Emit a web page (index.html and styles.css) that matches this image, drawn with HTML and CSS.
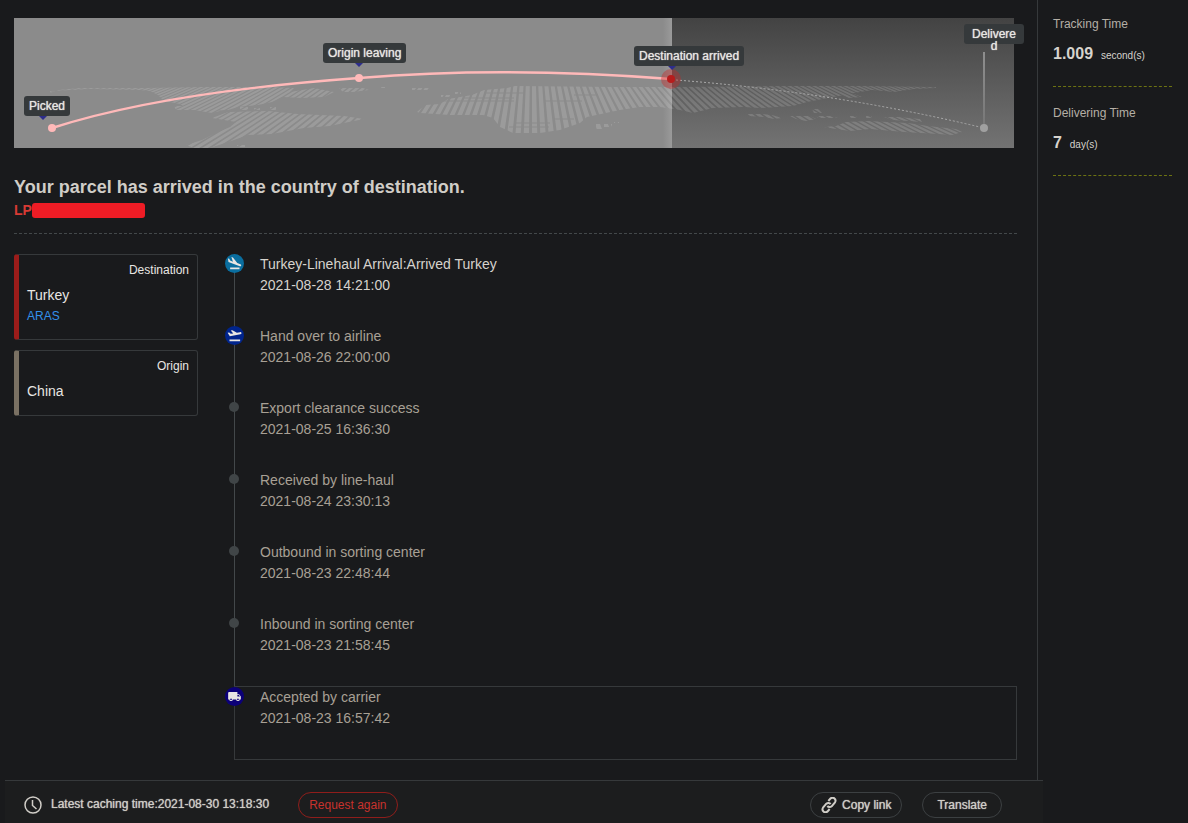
FILE: index.html
```html
<!DOCTYPE html>
<html lang="en">
<head>
  <meta charset="UTF-8">
  <title>Parcel tracking</title>
  <link rel="stylesheet" href="styles.css">
</head>
<body>
  <div class="page">
    <main class="main">
      <section class="route">
        <svg class="route-map" viewBox="0 0 1000 130">
          <defs>
            <linearGradient id="ahead" x1="0" y1="0" x2="0" y2="1">
              <stop offset="0" stop-color="#434343"/>
              <stop offset="1" stop-color="#737373"/>
            </linearGradient>
            <linearGradient id="edge">
              <stop offset="0" stop-color="#8b8b8b"/>
              <stop offset="1" stop-color="#9a9a9a"/>
            </linearGradient>
            <linearGradient id="pole" x1="0" y1="0" x2="0" y2="1">
              <stop offset="0" stop-color="#8e8e8e"/>
              <stop offset="1" stop-color="#777"/>
            </linearGradient>
            <clipPath id="land">
              <path d="M36 75l8-3 22-2h62l60-1h70l22 1-4 4 24-4 20 4-10 5-22 1-20-1-10 5-14 3-20 2-10 3-26 1-14-2-8-5-16-3-6-6-8-4-10-1-50-1-40 2z"/>
              <path d="M160 88h18l16 2 12 3-8 2-18-3-18 0zM226 89h8v3h-8zM240 90h6v2h-6zM256 89h6v3h-6z"/>
              <path d="M198 100l16-6 40-1 30 3 46 2 20 3-20 4-14 3-26 2-32 6-24 1-14 5-12 4-12 4h-16l-8-3 16-5 14-7 14-6 6-5z"/>
              <path d="M223 127h8v2h-8zM325 70h24l6 2-16 2h-10zM366 69h5v1h-5zM398 70h18v2h-18zM325 101h8v2h-8z"/>
              <path d="M403 94L411 87L426 86L434 81L458 77L470 72L493 70L501 68L606 69L660 69L780 68L846 68L922 69L922 70L900 71L880 74L858 72L846 74L819 79L793 84L779 88L746 90L729 89L699 90L679 95L666 92L646 89L626 89L606 92L573 99L566 105L546 112L526 115L499 115L486 109L479 100L469 97L436 97L406 95Z"/>
              <path d="M427 77h10v2h-10zM441 74h6v2h-6zM582 106h6v5h-6zM590 106h8v3h-8zM600 104h5v1h-5z"/>
              <path d="M734 96h14l10 1 10 3-8 1-10-2-16-1zM776 98h20l6 3-10 2-10-2zM798 91h6l4 4h-8zM802 98h14l8 2-20 0zM836 98h6l2 2h-8zM826 76h14l8 3-14 1zM852 98h6v2h-6z"/>
              <path d="M870 99h14l22 2 2 3-14-1-16-1zM810 109l12-1 10-4 22-1 40 2 20 3 28 3 6 3-10 3-14-1-34-2-34-3-20 2-14-2z"/>
            </clipPath>
          </defs>
          <rect width="1000" height="130" fill="#8b8b8b"/>
          <rect x="649" width="9" height="130" fill="url(#edge)"/>
          <rect x="658" width="342" height="130" fill="url(#ahead)"/>
          <g clip-path="url(#land)">
            <path id="meridians" fill="#fff" fill-opacity=".14"/>
            <path d="M450 80h50M470 75h40M430 83h70M530 83h38M560 77h24M495 109h40M500 105h36M540 101h20" stroke="#8b8b8b"/>
          </g>
          <path d="M38 110Q150 74 345 60Q490 48 657 61" fill="none" stroke="#ffb9b9" stroke-width="2.4"/>
          <path d="M662 62Q820 74 970 110" fill="none" stroke="#aaa" stroke-dasharray="2 2"/>
          <path d="M969 34h2v76h-2z" fill="url(#pole)"/>
          <circle cx="38" cy="110" r="4" fill="#ffb9b9"/>
          <circle cx="345" cy="60" r="4" fill="#ffb9b9"/>
          <circle cx="657" cy="61" r="10" fill="#c62828" fill-opacity=".4"/>
          <circle cx="657" cy="61" r="4" fill="#b71c1c"/>
          <circle cx="970" cy="110" r="4" fill="#a0a0a0"/>
        </svg>
        <span class="tag tag-picked">Picked</span>
        <span class="tag tag-leaving">Origin leaving</span>
        <span class="tag tag-arrived">Destination arrived</span>
        <span class="tag tag-delivered">Delivered</span>
      </section>

      <header class="summary">
        <h1>Your parcel has arrived in the country of destination.</h1>
        <div class="number">LP<span class="redacted"></span></div>
      </header>

      <div class="details">
        <aside class="places">
          <div class="place destination">
            <span class="place-type">Destination</span>
            <span class="country">Turkey</span>
            <a href="#">ARAS</a>
          </div>
          <div class="place origin">
            <span class="place-type">Origin</span>
            <span class="country">China</span>
          </div>
        </aside>

        <ol class="timeline">
          <li class="latest">
            <span class="badge badge-land">
              <svg viewBox="0 0 24 24"><path d="M5 18.500h15v2.500H5zM20.500 16.500c1 .3 1.900-.2 2.100-1.100.3-.9-.2-1.700-1.200-2.100l-5-2L9.500 2.500 7 1.500l2.500 7.500-4.500-2L3.500 4.500 1.500 4l.8 5.500z"/></svg>
            </span>
            <p>Turkey-Linehaul Arrival:Arrived Turkey</p>
            <time>2021-08-28 14:21:00</time>
          </li>
          <li>
            <span class="badge badge-takeoff">
              <svg viewBox="0 0 24 24"><path d="M4 18.500h17V21H4zM1 7.500l2.500-.2 2.500 2 4-.6L6 4l2.800-.5 7 4 5-.9c1.200-.2 2.200.3 2.400 1.300s-.5 1.700-1.700 2L4.500 13z"/></svg>
            </span>
            <p>Hand over to airline</p>
            <time>2021-08-26 22:00:00</time>
          </li>
          <li>
            <span class="dot"></span>
            <p>Export clearance success</p>
            <time>2021-08-25 16:36:30</time>
          </li>
          <li>
            <span class="dot"></span>
            <p>Received by line-haul</p>
            <time>2021-08-24 23:30:13</time>
          </li>
          <li>
            <span class="dot"></span>
            <p>Outbound in sorting center</p>
            <time>2021-08-23 22:48:44</time>
          </li>
          <li>
            <span class="dot"></span>
            <p>Inbound in sorting center</p>
            <time>2021-08-23 21:58:45</time>
          </li>
          <li class="first-event">
            <span class="badge badge-truck">
              <svg viewBox="-1 -1 26 26"><path d="M20 8h-3V4H3c-1.1 0-2 .9-2 2v11h2c0 1.66 1.34 3 3 3s3-1.34 3-3h6c0 1.66 1.34 3 3 3s3-1.34 3-3h2v-5zM6 18.5c-.83 0-1.5-.67-1.5-1.5s.67-1.5 1.5-1.5 1.5.67 1.5 1.5-.67 1.5-1.5 1.5zm13.5-9l1.96 2.5H17V9.5zm-1.5 9c-.83 0-1.5-.67-1.5-1.5s.67-1.5 1.5-1.5 1.5.67 1.5 1.5-.67 1.5-1.5 1.5z"/></svg>
            </span>
            <p>Accepted by carrier</p>
            <time>2021-08-23 16:57:42</time>
          </li>
        </ol>
      </div>
    </main>

    <aside class="stats">
      <div class="stat">
        <h2>Tracking Time</h2>
        <p><strong>1.009</strong> <small>second(s)</small></p>
      </div>
      <div class="stat">
        <h2>Delivering Time</h2>
        <p><strong>7</strong> <small>day(s)</small></p>
      </div>
    </aside>

    <footer class="bar">
      <svg class="clock" viewBox="0 0 18 18"><circle cx="9" cy="9" r="8"/><path d="M8.500 4v5.500l4 3.500"/></svg>
      <span class="caching">Latest caching time:2021-08-30 13:18:30</span>
      <button type="button" class="request">Request again</button>
      <button type="button" class="copy">
        <svg class="link-icon" viewBox="0 0 24 24"><path d="M9.500 13.500a4.500 4.500 0 0 0 6.500.5l5-6a4.500 4.500 0 0 0-6.500-6l-3.500 4"/><path d="M14.500 10.500a4.500 4.500 0 0 0-6.500-.5l-5 6a4.500 4.500 0 0 0 6.500 6l3.500-4"/></svg>
        Copy link
      </button>
      <button type="button" class="translate">Translate</button>
    </footer>
  </div>
  <script src="map.js"></script>
</body>
</html>
```

FILE: styles.css
```css
* {
  box-sizing: border-box;
}
body {
  margin: 0;
  background-color: #191a1c;
  color: #d6d3cd;
  font-family: "Liberation Sans", Arial, sans-serif;
  font-size: 14px;
  line-height: 21px;
}
h1, h2, p, ol {
  margin: 0;
  padding: 0;
}
.page {
  display: grid;
  grid-template-columns: 1fr 150px;
  grid-template-rows: 1fr auto;
  min-height: 100vh;
}
.main {
  padding: 18px 20px 20px 14px;
  border-right: 1px solid #36393b;
}

/* route banner */
.route {
  position: relative;
  margin-right: 3px;
}
.route-map {
  display: block;
  width: 100%;
}
.tag {
  position: absolute;
  height: 20px;
  padding: 0 5px;
  border-radius: 3px;
  background-color: #35393b;
  color: #e8e6e3;
  font-size: 12px;
  line-height: 20px;
  text-shadow: 0 0 1px #e8e6e3;
  white-space: nowrap;
}
.tag::after {
  content: "";
  position: absolute;
  top: 20px;
  left: 50%;
  border: 4px solid transparent;
  border-top-color: #2d2d8c;
  border-bottom: 0;
}
.tag-picked {
  left: 1%;
  top: 60%;
}
.tag-picked::after {
  left: 15px;
}
.tag-leaving {
  left: 30.9%;
  top: 19%;
}
.tag-leaving::after {
  left: 32px;
}
.tag-arrived {
  left: 62%;
  top: 21.5%;
}
.tag-arrived::after {
  left: 34px;
}
.tag-delivered {
  left: 95%;
  top: 4.5%;
  width: 60px;
  padding: 4px 7px;
  line-height: 12px;
  text-align: center;
  white-space: normal;
  word-break: break-all;
}
.tag-delivered::after {
  left: 16px;
  z-index: -1;
  border-top-color: #35393b;
}

/* headline */
.summary {
  padding: 28px 0 11px;
  border-bottom: 1px dashed #43484a;
}
h1 {
  font-size: 18px;
  line-height: 22px;
  color: #d0cdc7;
}
.number {
  display: flex;
  align-items: center;
  height: 24px;
  color: #d83a34;
  font-weight: bold;
}
.redacted {
  width: 113px;
  height: 15px;
  border-radius: 3px;
  background-color: #ee1c25;
}

/* places and events */
.details {
  display: flex;
  gap: 36px;
  padding-top: 20px;
}
.places {
  display: flex;
  flex-direction: column;
  gap: 10px;
  width: 184px;
}
.place {
  display: flex;
  flex-direction: column;
  padding: 5px 8px 13px;
  border: 1px solid #36393b;
  border-left: 5px solid #9b1c1a;
  border-radius: 3px;
}
.origin {
  border-left-color: #7a7163;
}
.place-type {
  align-self: flex-end;
  line-height: 20px;
  color: #e8e6e3;
  font-size: 12px;
}
.country {
  padding-top: 5px;
  color: #e8e6e3;
}
.place a {
  line-height: 20px;
  color: #3391ea;
  font-size: 12px;
  text-decoration: none;
}
.timeline {
  flex: 1;
  list-style: none;
}
.timeline li {
  position: relative;
  height: 72px;
  padding-left: 25px;
  border-left: 1px solid #43484a;
  color: #a8a095;
}
.timeline .latest {
  color: #d6d3cd;
}
.timeline .first-event {
  height: 74px;
  border: 1px solid #36393b;
}
.timeline time {
  display: block;
}
.badge {
  position: absolute;
  top: 0;
  left: -10px;
  display: flex;
  align-items: center;
  justify-content: center;
  width: 19px;
  height: 19px;
  border-radius: 50%;
}
.badge svg {
  width: 15px;
  height: 15px;
  fill: #e8e6e3;
}
.badge-land {
  background-color: #0a6e9f;
}
.badge-takeoff {
  background-color: #00248c;
}
.badge-truck {
  background-color: #0c0078;
}
.dot {
  position: absolute;
  top: 4px;
  left: -6px;
  width: 10px;
  height: 10px;
  border-radius: 50%;
  background-color: #404547;
}

/* right column */
.stats {
  padding: 14px 16px 0 15px;
}
.stat {
  height: 73px;
  margin-bottom: 16px;
  border-bottom: 1px dashed #6c7312;
}
.stat h2 {
  line-height: 20px;
  color: #b5afa6;
  font-size: 12px;
  font-weight: normal;
}
.stat p {
  padding-top: 9px;
}
.stat strong {
  margin-right: 4px;
  font-size: 16px;
}
.stat small {
  font-size: 10px;
}

/* bottom bar */
.bar {
  display: flex;
  align-items: center;
  grid-column: 1;
  height: 43px;
  margin: 0 -5px 0 5px;
  padding: 5px 41px 0 19px;
  border-top: 1px solid #36393b;
  background-color: #1c1d1e;
  color: #d0cdc7;
  font-size: 12px;
}
.caching, .bar .copy, .bar .translate {
  text-shadow: 0 0 1px #d0cdc7;
}
.clock {
  width: 18px;
  height: 18px;
  margin-right: 9px;
  fill: none;
  stroke: #d0cdc7;
  stroke-width: 1.5;
}
.bar button {
  display: flex;
  align-items: center;
  justify-content: center;
  height: 26px;
  padding: 0 10px;
  border: 1px solid #3c4042;
  border-radius: 13px;
  background-color: transparent;
  color: #d0cdc7;
  font-family: inherit;
  font-size: 12px;
}
.bar .request {
  margin-left: 29px;
  border-color: #8f1d1b;
  color: #c8322d;
}
.bar .copy {
  margin-left: auto;
}
.bar .translate {
  margin-left: 20px;
  padding: 0 14px;
}
.link-icon {
  width: 16px;
  height: 16px;
  margin-right: 5px;
  fill: none;
  stroke: #d0cdc7;
  stroke-width: 3;
}
```

FILE: map.js
```js
// stripes of the world map, fanning out from a point above the banner
const centerX = 518;
const centerY = -75;
const x = (slope, y) => (centerX + slope * (y - centerY)).toFixed(1);
let d = '';

for (let i = -110; i <= 110; i++) {
  const a = i * 0.0435;
  const b = a + 0.028;
  d += `M${x(a, 60)} 60L${x(b, 60)} 60L${x(b, 130)} 130L${x(a, 130)} 130Z`;
}

document.getElementById('meridians').setAttribute('d', d);
```
